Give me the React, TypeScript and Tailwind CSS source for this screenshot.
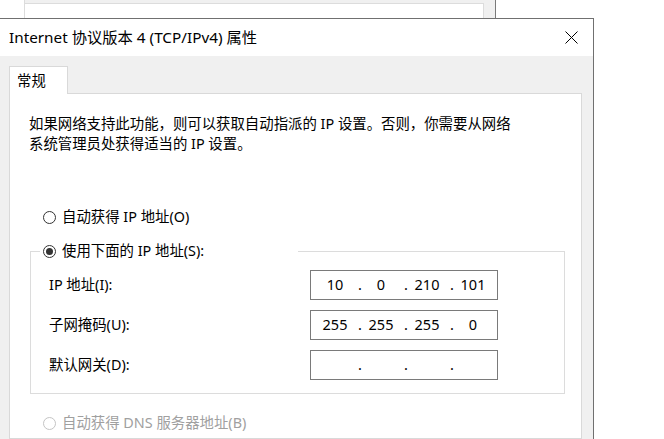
import React from 'react';

const font = { fontFamily: '"Noto Sans", "Noto Sans CJK SC", sans-serif' };

function Radio({ checked, disabled }: { checked?: boolean; disabled?: boolean }) {
    return (
        <span
            className={
                'w-[13px] h-[13px] rounded-full border bg-white flex items-center justify-center shrink-0 ' +
                (disabled ? 'border-[#c4c4c4]' : 'border-[#333333]')
            }
        >
            {checked && <span className="w-[7px] h-[7px] rounded-full bg-[#333333]" />}
        </span>
    );
}

function IpField({ parts }: { parts: string[] }) {
    return (
        <div className="w-[188px] h-[30px] border border-[#7a7a7a] bg-white flex items-center pl-[6px] text-[14.5px] text-black">
            {parts.map((p, i) => (
                <React.Fragment key={i}>
                    <span className="w-[36px] text-center">{p}</span>
                    {i < 3 && <span className="w-[10px] pl-[4px] text-center">.</span>}
                </React.Fragment>
            ))}
        </div>
    );
}

const rows = [
    { label: 'IP 地址(I):', parts: ['10', '0', '210', '101'] },
    { label: '子网掩码(U):', parts: ['255', '255', '255', '0'] },
    { label: '默认网关(D):', parts: ['', '', '', ''] },
];

export default function App() {
    return (
        <div className="w-[664px] h-[439px] bg-white overflow-hidden text-black" style={font}>
            {/* window behind */}
            <div className="h-[18px] flex">
                <div className="w-[24px]" />
                <div className="w-[472px] bg-[#f0f0f0] border-l border-l-[#dcdcdc] border-r border-r-[#7a7a7a] pt-[3px] pr-[11px]">
                    <div className="h-full bg-white border-t border-r border-[#dcdcdc]" />
                </div>
            </div>

            {/* dialog */}
            <div className="w-[594px] border-t border-r border-[#707070] h-[421px] flex flex-col">
                <div className="h-[37px] bg-white flex items-center justify-between pl-[9px] pr-[15px]">
                    <span className="text-[15.3px] leading-none">Internet 协议版本 4 (TCP/IPv4) 属性</span>
                    <svg width="13" height="13" viewBox="0 0 13 13" className="shrink-0">
                        <path d="M0.5 0.5 L12.5 12.5 M12.5 0.5 L0.5 12.5" stroke="#000" strokeWidth="1" fill="none" />
                    </svg>
                </div>

                <div className="flex-1 bg-[#f0f0f0] pt-[10px] pl-[9px] pr-[11px] flex flex-col">
                    <div className="relative z-10 w-[59px] h-[28px] -mb-px bg-white border border-b-0 border-[#d9d9d9] pl-[7px] pt-[3px] text-[14.4px]">
                        常规
                    </div>
                    <div className="flex-1 bg-white border border-[#d9d9d9] pt-[20px] pl-[19px] text-[14.4px]">
                        <p className="leading-[20px]">
                            如果网络支持此功能，则可以获取自动指派的 IP 设置。否则，你需要从网络
                            <br />
                            系统管理员处获得适当的 IP 设置。
                        </p>

                        <div className="mt-[53px] ml-[14px] h-[20px] flex items-center gap-[6px]">
                            <Radio />
                            <span>自动获得 IP 地址(O)</span>
                        </div>

                        <div className="mt-[24px] ml-[1px] w-[535px] border border-[#dcdcdc] pb-[13px]">
                            <div className="-mt-[11px] ml-[9px] w-[258px] h-[20px] bg-white pl-[3px] flex items-center gap-[6px]">
                                <Radio checked />
                                <span>使用下面的 IP 地址(S):</span>
                            </div>
                            <div className="mt-[9px] flex flex-col gap-[10px]">
                                {rows.map((r) => (
                                    <div key={r.label} className="flex items-center pl-[18px]">
                                        <span className="w-[261px]">{r.label}</span>
                                        <IpField parts={r.parts} />
                                    </div>
                                ))}
                            </div>
                        </div>

                        <div className="mt-[19px] ml-[14px] h-[20px] flex items-center gap-[6px] text-[#a0a0a0]">
                            <Radio disabled />
                            <span>自动获得 DNS 服务器地址(B)</span>
                        </div>
                    </div>
                </div>
            </div>
        </div>
    );
}
